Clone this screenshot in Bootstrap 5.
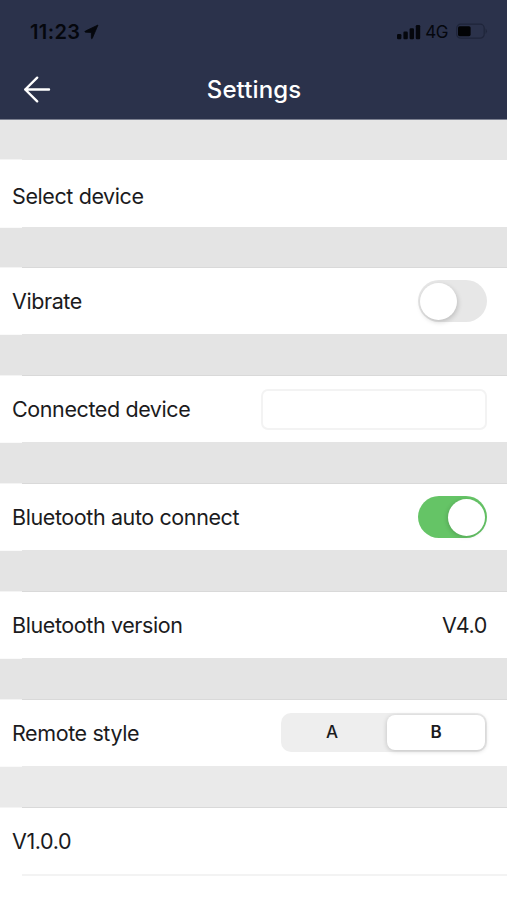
<!DOCTYPE html>
<html lang="en">
<head>
<meta charset="utf-8">
<meta name="viewport" content="width=device-width, initial-scale=1">
<title>Settings</title>
<link href="https://cdn.jsdelivr.net/npm/bootstrap@5.3.0/dist/css/bootstrap.min.css" rel="stylesheet">
<style>
  body { font-family: Inter, "Liberation Sans", sans-serif; color: #1b1b1d; height: 900px; overflow: hidden; }
  .app-head { height: 120px; background: #2b324b; border-bottom: 1px solid #7c8090; }
  .status { height: 60px; padding: 3px 19px 0 30px; color: #05070d; }
  .clock { font-size: 20px; font-weight: 600; line-height: 24px; letter-spacing: .4px; }
  .net { font-size: 17px; line-height: 20px; letter-spacing: -.4px; }
  .title-bar { height: 59px; display: grid; grid-template-columns: 1fr auto 1fr; padding: 0 22px 0 23px; }
  .title-bar h1 { font-size: 24px; font-weight: 550; line-height: 28px; letter-spacing: .1px; }
  .gap-band { height: 42px; background: linear-gradient(#fafafa, #fafafa) 0 0 / 22px 1px no-repeat,
    linear-gradient(#f4f4f4, #f4f4f4) 0 100% / 22px 1px no-repeat,
    linear-gradient(#d9d9d9, #d9d9d9) 22px 100% / 100% 1px no-repeat, #e4e4e4; }
  .gap-first { height: 40px; background: linear-gradient(#f4f4f4, #f4f4f4) 0 100% / 22px 1px no-repeat, #e6e6e6; }
  .gap-second { height: 41px; }
  .gap-last { background-color: #eaeaea; }
  .setting { height: 66px; padding: 0 20px 0 12px; font-size: 21.5px; line-height: 28px; letter-spacing: -.4px; }
  .setting-first { height: 67px; padding-top: 5px; }
  .setting-raised { padding-bottom: 1px; }
  .form-switch.toggle { padding: 0; min-height: 0; margin: 0; }
  .toggle .form-check-input { width: 69px; height: 42px; margin: 0; border: 0; background: #e7e7e7; border-radius: 21px; display: flex; align-items: center; padding: 0 2px; float: none; box-shadow: none; }
  .toggle .form-check-input::before { content: ""; width: 37px; height: 37px; border-radius: 50%; background: #fff; box-shadow: 1px 2px 5px rgba(0,0,0,.18); }
  .toggle .form-check-input:checked { background: #65c466; justify-content: flex-end; }
  .toggle .form-check-input:checked::before { box-shadow: -1px 1px 4px rgba(0,0,0,.16); }
  .device-field { width: 226px; height: 41px; border: 2px solid #f3f3f3; border-radius: 7px; }
  .segments { width: 206px; height: 39px; padding: 2px; background: #eee; border-radius: 10px; }
  .segments .btn { width: 98px; padding: 0; border: 0; border-radius: 8px; font-size: 17px; font-weight: 500; line-height: 35px; color: #1b1b1d; }
  .segments .btn.active { font-weight: 600; background: #fff; box-shadow: 0 1px 5px rgba(0,0,0,.2); color: #1b1b1d; }
  .end-line { height: 2px; margin-left: 22px; background: #f3f3f3; }
</style>
<script src="https://cdn.jsdelivr.net/npm/bootstrap@5.3.0/dist/js/bootstrap.bundle.min.js"></script>
</head>
<body class="bg-white">
<header class="app-head">
  <div class="status d-flex align-items-center justify-content-between">
    <div class="d-flex align-items-center">
      <span class="clock">11:23</span>
      <svg class="ms-1" width="15" height="16" viewBox="0 0 15 16"><path d="M14 1 8.3 14.3Q7.6 15.4 7.4 14V8.5L1.6 8.2Q.2 7.8 1.4 7Z" fill="currentColor" stroke="currentColor" stroke-width=".8" stroke-linejoin="round"/></svg>
    </div>
    <div class="d-flex align-items-center">
      <svg width="24" height="16" viewBox="0 0 24 16" fill="currentColor"><rect x="0" y="10" width="4.4" height="5.2" rx="1.2"/><rect x="6.4" y="7.5" width="4.4" height="7.7" rx="1.2"/><rect x="12.6" y="4.3" width="4.4" height="10.9" rx="1.2"/><rect x="18.8" y="1" width="4.4" height="14.2" rx="1.2"/></svg>
      <span class="net ms-1 me-2">4G</span>
      <svg width="32" height="17" viewBox="0 0 32 17"><rect x=".7" y="1.2" width="27.5" height="14" rx="4" fill="none" stroke="#1f253a" stroke-width="1.2"/><rect x="2" y="3.2" width="12.6" height="10" rx="1.6" fill="#020305"/><path d="M29.6 5.5q2.6 2.7 0 5.4z" fill="#1f253a"/></svg>
    </div>
  </div>
  <div class="title-bar align-items-center">
    <svg width="29" height="28" viewBox="0 0 29 28" fill="none" stroke="#fff" stroke-width="2.4" stroke-linecap="round" stroke-linejoin="round"><path d="M26 13.5H2.2M14.2 1.7 2.2 13.5l12 11.8"/></svg>
    <h1 class="m-0 text-white">Settings</h1>
  </div>
</header>
<main>
  <div class="gap-band gap-first"></div>
  <div class="setting setting-first d-flex align-items-center"><span>Select device</span></div>
  <div class="gap-band gap-second"></div>
  <div class="setting d-flex align-items-center justify-content-between"><label for="vib">Vibrate</label>
    <div class="form-check form-switch toggle"><input class="form-check-input" type="checkbox" role="switch" id="vib"></div></div>
  <div class="gap-band"></div>
  <div class="setting d-flex align-items-center justify-content-between"><label for="dev">Connected device</label>
    <input class="form-control device-field" id="dev" type="text"></div>
  <div class="gap-band"></div>
  <div class="setting d-flex align-items-center justify-content-between"><label for="auto">Bluetooth auto connect</label>
    <div class="form-check form-switch toggle"><input class="form-check-input" type="checkbox" role="switch" id="auto" checked></div></div>
  <div class="gap-band"></div>
  <div class="setting d-flex align-items-center justify-content-between"><span>Bluetooth version</span><span>V4.0</span></div>
  <div class="gap-band"></div>
  <div class="setting setting-raised d-flex align-items-center justify-content-between"><span>Remote style</span>
    <div class="segments d-flex justify-content-between" role="group"><button type="button" class="btn">A</button><button type="button" class="btn active">B</button></div></div>
  <div class="gap-band gap-last"></div>
  <div class="setting setting-raised d-flex align-items-center"><span>V1.0.0</span></div>
  <div class="end-line"></div>
</main>
</body>
</html>
